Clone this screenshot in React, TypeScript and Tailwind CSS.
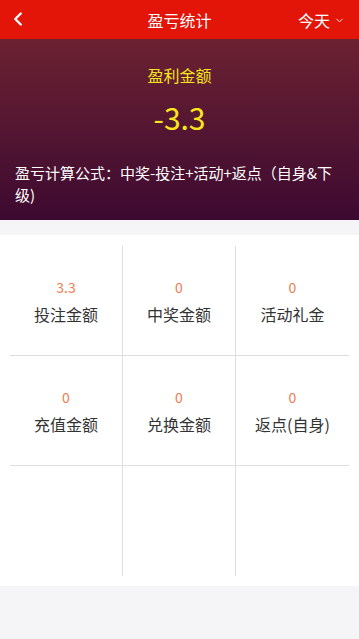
import { ChevronLeft, ChevronDown } from "lucide-react";

const STATS = [
  { value: "3.3", label: "投注金额" },
  { value: "0", label: "中奖金额" },
  { value: "0", label: "活动礼金" },
  { value: "0", label: "充值金额" },
  { value: "0", label: "兑换金额" },
  { value: "0", label: "返点(自身)" },
];

export default function App() {
  const cells = [...STATS, null, null, null];

  return (
    <div
      className="min-h-[639px] bg-[#f5f5f7]"
      style={{ fontFamily: '"Noto Sans CJK SC", "Noto Sans", sans-serif' }}
    >
      <header className="relative h-[39px] bg-[#e31408] flex items-center justify-center text-white">
        <ChevronLeft className="absolute left-[7px] top-[8px] w-[22px] h-[22px]" strokeWidth={2.6} />
        <h1 className="text-[16px] leading-none">盈亏统计</h1>
        <div className="absolute right-[14px] top-0 h-full flex items-center gap-[4px]">
          <span className="text-[16px] leading-none">今天</span>
          <ChevronDown className="w-[11px] h-[11px] mt-[2px]" strokeWidth={2} />
        </div>
      </header>

      <section className="h-[181px] bg-gradient-to-b from-[#6c2131] to-[#3d0930] pt-[24px] px-[15px]">
        <p className="text-center text-[16px] leading-[24px] text-[#f5e51e]">盈利金额</p>
        <p className="text-center text-[30px] leading-[38px] mt-[11px] text-[#fbe71b]">-3.3</p>
        <p className="mt-[26px] text-[15px] leading-[22px] text-white">
          盈亏计算公式：中奖-投注+活动+返点（自身&amp;下级)
        </p>
      </section>

      <div className="mt-[15px] bg-white px-[10px] pt-[11px] pb-[10px]">
        <div className="grid grid-cols-3">
          {cells.map((c, i) => (
            <div
              key={i}
              className={[
                "h-[110px] flex flex-col items-center justify-center",
                i % 3 !== 2 ? "border-r border-[#dedede]" : "",
                i < 6 ? "border-b border-[#dedede]" : "",
              ].join(" ")}
            >
              {c && (
                <>
                  <span className="text-[14px] leading-[20px] text-[#ee7c50]">{c.value}</span>
                  <span className="mt-[6px] text-[16px] leading-[22px] text-[#333]">{c.label}</span>
                </>
              )}
            </div>
          ))}
        </div>
      </div>
    </div>
  );
}
